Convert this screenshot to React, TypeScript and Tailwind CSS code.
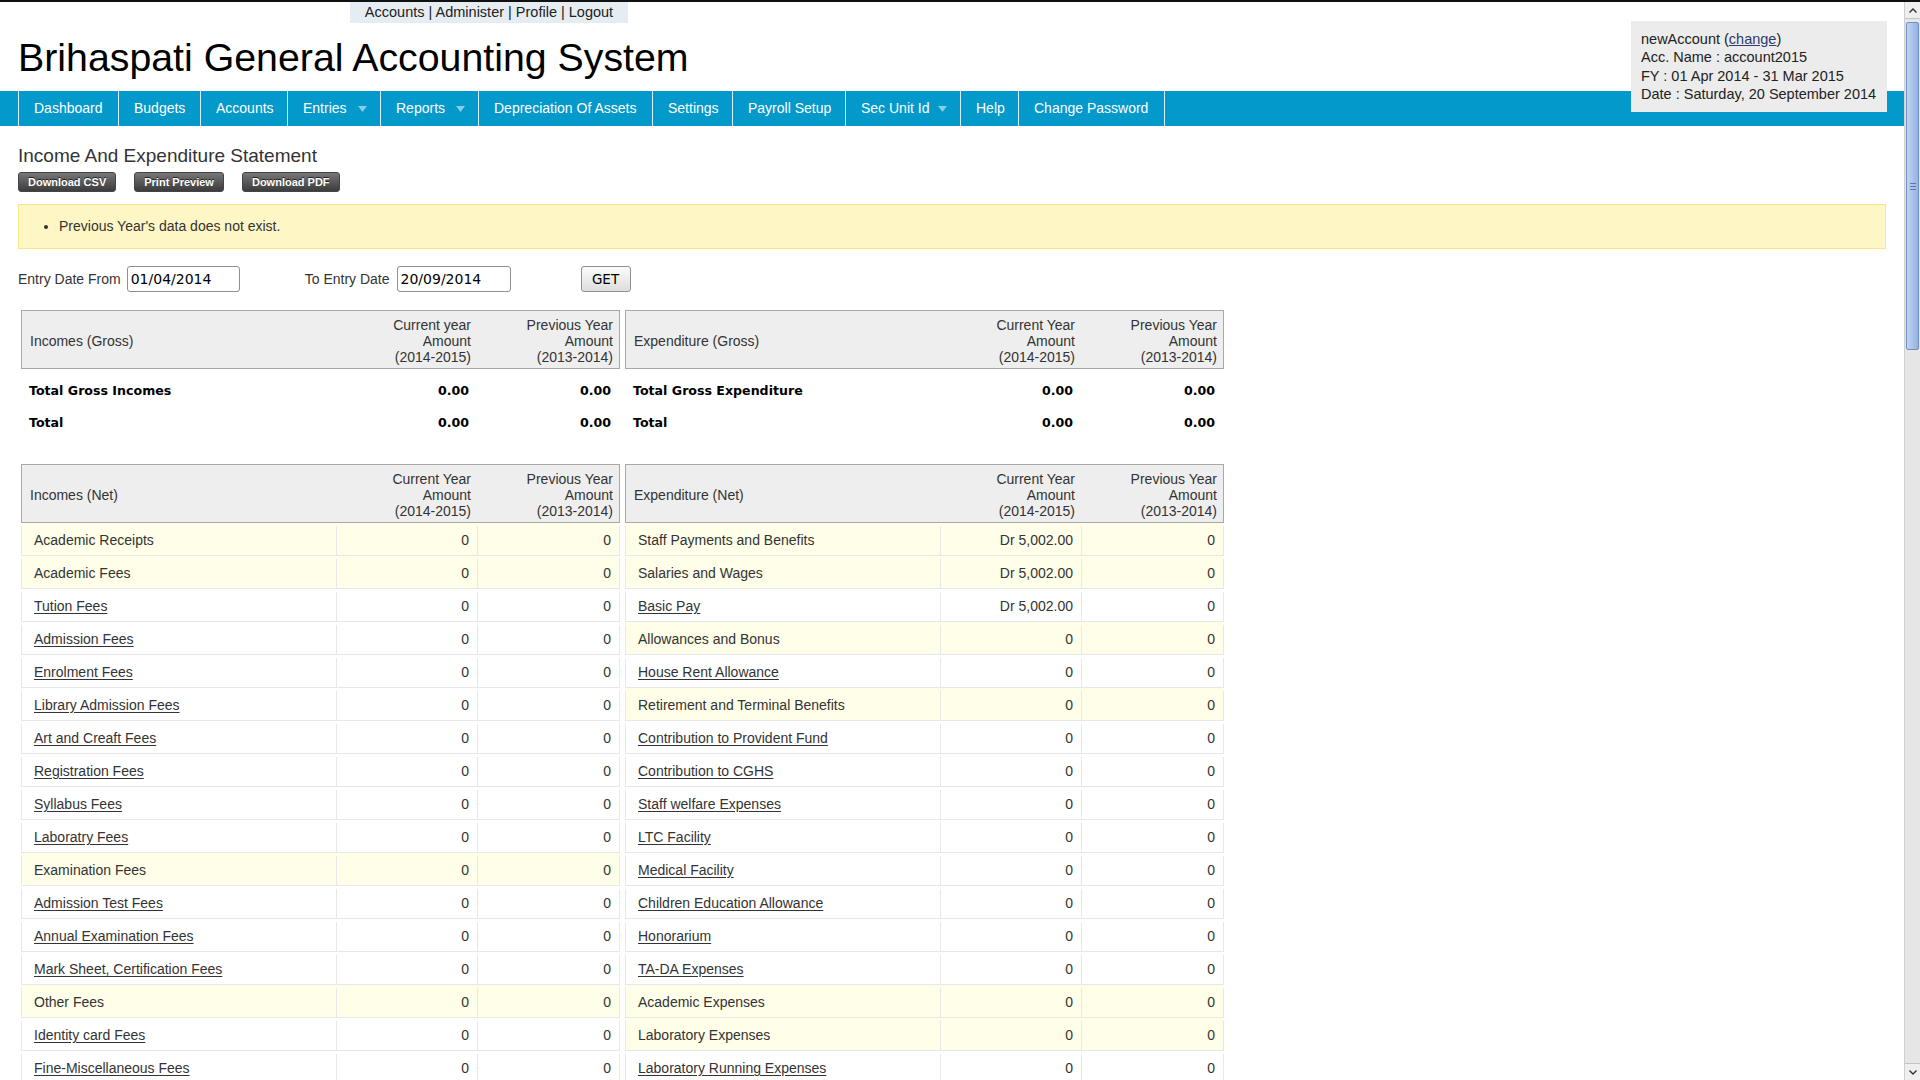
import React from "react";

type Row = { name: string; cur: string; prev: string; group: boolean };

const leftRows: Row[] = [
  { name: "Academic Receipts", cur: "0", prev: "0", group: true },
  { name: "Academic Fees", cur: "0", prev: "0", group: true },
  { name: "Tution Fees", cur: "0", prev: "0", group: false },
  { name: "Admission Fees", cur: "0", prev: "0", group: false },
  { name: "Enrolment Fees", cur: "0", prev: "0", group: false },
  { name: "Library Admission Fees", cur: "0", prev: "0", group: false },
  { name: "Art and Creaft Fees", cur: "0", prev: "0", group: false },
  { name: "Registration Fees", cur: "0", prev: "0", group: false },
  { name: "Syllabus Fees", cur: "0", prev: "0", group: false },
  { name: "Laboratry Fees", cur: "0", prev: "0", group: false },
  { name: "Examination Fees", cur: "0", prev: "0", group: true },
  { name: "Admission Test Fees", cur: "0", prev: "0", group: false },
  { name: "Annual Examination Fees", cur: "0", prev: "0", group: false },
  { name: "Mark Sheet, Certification Fees", cur: "0", prev: "0", group: false },
  { name: "Other Fees", cur: "0", prev: "0", group: true },
  { name: "Identity card Fees", cur: "0", prev: "0", group: false },
  { name: "Fine-Miscellaneous Fees", cur: "0", prev: "0", group: false },
];

const rightRows: Row[] = [
  { name: "Staff Payments and Benefits", cur: "Dr 5,002.00", prev: "0", group: true },
  { name: "Salaries and Wages", cur: "Dr 5,002.00", prev: "0", group: true },
  { name: "Basic Pay", cur: "Dr 5,002.00", prev: "0", group: false },
  { name: "Allowances and Bonus", cur: "0", prev: "0", group: true },
  { name: "House Rent Allowance", cur: "0", prev: "0", group: false },
  { name: "Retirement and Terminal Benefits", cur: "0", prev: "0", group: true },
  { name: "Contribution to Provident Fund", cur: "0", prev: "0", group: false },
  { name: "Contribution to CGHS", cur: "0", prev: "0", group: false },
  { name: "Staff welfare Expenses", cur: "0", prev: "0", group: false },
  { name: "LTC Facility", cur: "0", prev: "0", group: false },
  { name: "Medical Facility", cur: "0", prev: "0", group: false },
  { name: "Children Education Allowance", cur: "0", prev: "0", group: false },
  { name: "Honorarium", cur: "0", prev: "0", group: false },
  { name: "TA-DA Expenses", cur: "0", prev: "0", group: false },
  { name: "Academic Expenses", cur: "0", prev: "0", group: true },
  { name: "Laboratory Expenses", cur: "0", prev: "0", group: true },
  { name: "Laboratory Running Expenses", cur: "0", prev: "0", group: false },
];

const navItems: { label: string; drop: boolean; w: string }[] = [
  { label: "Dashboard", drop: false, w: "w-[101px] border-l" },
  { label: "Budgets", drop: false, w: "w-[82px]" },
  { label: "Accounts", drop: false, w: "w-[87px]" },
  { label: "Entries", drop: true, w: "w-[93px]" },
  { label: "Reports", drop: true, w: "w-[98px]" },
  { label: "Depreciation Of Assets", drop: false, w: "w-[174px]" },
  { label: "Settings", drop: false, w: "w-[80px]" },
  { label: "Payroll Setup", drop: false, w: "w-[113px]" },
  { label: "Sec Unit Id", drop: true, w: "w-[115px]" },
  { label: "Help", drop: false, w: "w-[58px]" },
  { label: "Change Password", drop: false, w: "w-[146px]" },
];

function Arrow() {
  return (
    <svg width="9" height="6" viewBox="0 0 9 6" className="shrink-0">
      <polygon points="0,0 9,0 4.5,6" fill="#86cde8" />
    </svg>
  );
}

function HeaderRow({ title, curLabel }: { title: string; curLabel: string }) {
  return (
    <div className="grid h-[59px] grid-cols-[316px_141px_142px] items-center border border-[#a8a8a8] bg-[#eeeeee] pt-[3px] text-[14px] leading-[16px] text-[#333]">
      <div className="pl-[8px]">{title}</div>
      <div className="pr-[8px] text-right">
        <div>{curLabel}</div>
        <div>Amount</div>
        <div>(2014-2015)</div>
      </div>
      <div className="pr-[8px] text-right">
        <div>Previous Year</div>
        <div>Amount</div>
        <div>(2013-2014)</div>
      </div>
    </div>
  );
}

function TotalRow({ label }: { label: string }) {
  return (
    <div className="grid h-[32px] grid-cols-[316px_141px_142px] items-center font-['DejaVu_Sans',sans-serif] text-[12.6px] font-bold text-black">
      <div className="pl-[8px]">{label}</div>
      <div className="pr-[9px] text-right">0.00</div>
      <div className="pr-[9px] text-right">0.00</div>
    </div>
  );
}

function NetRow({ r }: { r: Row }) {
  const bg = r.group ? "bg-[#fefee9]" : "bg-white";
  return (
    <div className={`grid h-[33px] grid-cols-[316px_141px_142px] border-b border-[#e8e8e8] pt-[3px] text-[14px] text-[#333] ${bg}`}>
      <div className="flex items-center border-l border-r border-[#e8e8e8] pl-[12px]">
        {r.group ? <span>{r.name}</span> : <a className="underline underline-offset-2">{r.name}</a>}
      </div>
      <div className="flex items-center justify-end border-r border-[#e8e8e8] pr-[8px]">{r.cur}</div>
      <div className="flex items-center justify-end border-r border-[#e8e8e8] pr-[8px]">{r.prev}</div>
    </div>
  );
}

function Side({ gTitle, gCur, gTotal, nTitle, rows }: { gTitle: string; gCur: string; gTotal: string; nTitle: string; rows: Row[] }) {
  return (
    <div className="w-[599px]">
      <HeaderRow title={gTitle} curLabel={gCur} />
      <div className="pt-[6px]">
        <TotalRow label={gTotal} />
        <TotalRow label="Total" />
      </div>
      <div className="mt-[25px]">
        <HeaderRow title={nTitle} curLabel="Current Year" />
        {rows.map((r) => (
          <NetRow key={r.name} r={r} />
        ))}
      </div>
    </div>
  );
}

function ScrollBar() {
  return (
    <div className="flex h-full w-[16px] shrink-0 flex-col border-l border-[#cfcfcf] bg-[#e6e6e6]">
      <div className="flex h-[17px] items-center justify-center border-b border-[#c4c4c4] bg-[#efefef]">
        <svg width="8" height="5" viewBox="0 0 8 5">
          <polyline points="0.5,4.5 4,1 7.5,4.5" fill="none" stroke="#333" strokeWidth="1.4" />
        </svg>
      </div>
      <div className="flex-1 px-[1px] pt-[3px]">
        <div className="flex h-[328px] items-center justify-center rounded-[2px] border border-[#6f8fc4] bg-gradient-to-r from-[#c2d4f1] to-[#96b2df]">
          <div className="flex flex-col gap-[2px]">
            <div className="h-px w-[6px] bg-[#5a78a8]" />
            <div className="h-px w-[6px] bg-[#5a78a8]" />
            <div className="h-px w-[6px] bg-[#5a78a8]" />
          </div>
        </div>
      </div>
      <div className="flex h-[17px] items-center justify-center border-t border-[#c4c4c4] bg-[#efefef]">
        <svg width="8" height="5" viewBox="0 0 8 5">
          <polyline points="0.5,0.5 4,4 7.5,0.5" fill="none" stroke="#333" strokeWidth="1.4" />
        </svg>
      </div>
    </div>
  );
}

export default function App() {
  return (
    <div className="flex h-screen overflow-hidden border-t-2 border-[#111] bg-white font-['Liberation_Sans',Arial,sans-serif] text-[#333]">
      <div className="relative min-w-0 flex-1 overflow-hidden">
        {/* header */}
        <div className="flex">
          <div className="ml-[350px] flex h-[21px] w-[278px] items-center justify-center bg-[#e5edf2] text-[14.5px] text-[#222]">
            Accounts | Administer | Profile | Logout
          </div>
        </div>
        <h1 className="pl-[18px] pt-[15px] text-[39.3px] leading-[39px] text-black">Brihaspati General Accounting System</h1>
        <nav className="mt-[14px] flex h-[35px] bg-[#0399cb] pl-[18px] text-[14px] text-white">
          {navItems.map((n) => (
            <div
              key={n.label}
              className={`flex items-center border-r border-[#d6edf6] ${n.w} ${n.drop ? "justify-between pl-[15px] pr-[13px]" : "pl-[15px]"}`}
            >
              <span>{n.label}</span>
              {n.drop && <Arrow />}
            </div>
          ))}
        </nav>
        <div className="absolute right-[17px] top-[19px] h-[91px] w-[256px] bg-[#ececec] pl-[10px] pt-[9px] text-[14.5px] leading-[18.4px] text-[#222]">
          <div>
            newAccount (<a className="text-[#2d3b6e] underline">change</a>)
          </div>
          <div>Acc. Name : account2015</div>
          <div>FY : 01 Apr 2014 - 31 Mar 2015</div>
          <div>Date : Saturday, 20 September 2014</div>
        </div>

        {/* content */}
        <div className="px-[18px]">
          <h2 className="mt-[19px] text-[19px] leading-[22px] text-[#333]">Income And Expenditure Statement</h2>
          <div className="mt-[5px] flex gap-[18px]">
            {["Download CSV", "Print Preview", "Download PDF"].map((b) => (
              <button
                key={b}
                className="h-[20px] rounded-[3px] border border-[#444] bg-gradient-to-b from-[#777777] to-[#3c3c3c] px-[9px] text-[11px] font-bold text-white [text-shadow:0_-1px_0_#222]"
              >
                {b}
              </button>
            ))}
          </div>
          <div className="mt-[12px] flex h-[45px] items-center border border-[#fce589] bg-[#fef6c4]">
            <ul className="list-disc pl-[40px] text-[14px] text-[#333]">
              <li>Previous Year's data does not exist.</li>
            </ul>
          </div>
          <div className="mt-[17px] flex h-[26px] items-center text-[14px] text-[#333]">
            <span>Entry Date From</span>
            <input
              readOnly
              value="01/04/2014"
              className="ml-[6px] h-[26px] w-[113px] rounded-[3px] border border-[#8f8f8f] bg-white pl-[3px] font-['DejaVu_Sans',sans-serif] text-[14px] text-black"
            />
            <span className="ml-[65px]">To Entry Date</span>
            <input
              readOnly
              value="20/09/2014"
              className="ml-[7px] h-[26px] w-[114px] rounded-[3px] border border-[#8f8f8f] bg-white pl-[3px] font-['DejaVu_Sans',sans-serif] text-[14px] text-black"
            />
            <button className="ml-[70px] h-[26px] w-[50px] rounded-[3px] border border-[#8f8f8f] bg-gradient-to-b from-[#fbfbfb] to-[#dedede] font-['DejaVu_Sans',sans-serif] text-[13.5px] text-black">
              GET
            </button>
          </div>
          <div className="ml-[3px] mt-[18px] flex gap-[5px]">
            <Side gTitle="Incomes (Gross)" gCur="Current year" gTotal="Total Gross Incomes" nTitle="Incomes (Net)" rows={leftRows} />
            <Side gTitle="Expenditure (Gross)" gCur="Current Year" gTotal="Total Gross Expenditure" nTitle="Expenditure (Net)" rows={rightRows} />
          </div>
        </div>
      </div>
      <ScrollBar />
    </div>
  );
}
